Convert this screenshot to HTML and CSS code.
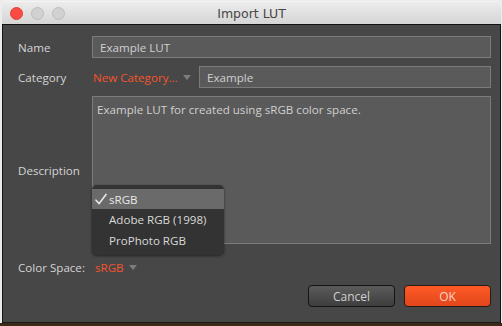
FILE: index.html
```html
<!DOCTYPE html>
<html>
<head>
<meta charset="utf-8">
<title>Import LUT</title>
<link rel="stylesheet" href="styles.css">
</head>
<body>
<div class="window">
  <div class="titlebar">
    <div class="lights">
      <span class="light red"></span>
      <span class="light"></span>
      <span class="light"></span>
    </div>
    <div class="title">Import LUT</div>
  </div>
  <div class="content">
    <div class="form">
      <div class="label">Name</div>
      <div class="field">Example LUT</div>

      <div class="label">Category</div>
      <div class="row">
        <div class="select cat">New Category...<span class="tri"></span></div>
        <div class="field grow">Example</div>
      </div>

      <div class="label">Description</div>
      <div class="field area">Example LUT for created using sRGB color space.</div>

      <div class="label cs">Color Space:</div>
      <div class="row cs">
        <div class="select space">sRGB<span class="tri"></span></div>
      </div>
    </div>
    <div class="buttons">
      <div class="btn cancel">Cancel</div>
      <div class="btn ok">OK</div>
    </div>
    <div class="menu">
      <div class="item sel">
        <svg class="check" width="12" height="12" viewBox="0 0 12 12"><path d="M1 7.2 L4.2 10.6 L11 1.4" fill="none" stroke="#e6e6e6" stroke-width="1.6" stroke-linecap="round" stroke-linejoin="round"/></svg>
        sRGB
      </div>
      <div class="item">Adobe RGB (1998)</div>
      <div class="item">ProPhoto RGB</div>
    </div>
  </div>
</div>
<div class="desk"></div>
</body>
</html>
```
FILE: styles.css
```css
html, body {
  margin: 0;
  padding: 0;
}
body {
  width: 502px;
  height: 326px;
  overflow: hidden;
  background: #ececec;
  font-family: "Open Sans", "DejaVu Sans", sans-serif;
  font-size: 11.6px;
}
.window {
  margin: 1px 1px 0 2px;
  width: 499px;
  height: 322px;
  display: flex;
  flex-direction: column;
  position: relative;
}
.titlebar {
  height: 22px;
  background: linear-gradient(#ececec, #d5d5d5);
  border-top: 1px solid #f4f4f4;
  border-radius: 5px 5px 0 0;
  border-bottom: 1px solid #111;
  position: relative;
  display: flex;
  align-items: center;
  justify-content: center;
}
.lights {
  position: absolute;
  left: 8px;
  top: 5px;
  display: flex;
  gap: 8px;
}
.light {
  width: 11px;
  height: 11px;
  border-radius: 50%;
  background: #d1d1d1;
  border: 0.5px solid #bdbdbd;
}
.light.red {
  background: #fc4b45;
  border-color: #e0413b;
}
.title {
  font-family: "DejaVu Sans", sans-serif;
  font-size: 12.5px;
  color: #464646;
  margin-top: 1px;
}
.content {
  flex: 1;
  background: #474747;
  border-left: 1px solid #151515;
  border-right: 1px solid #151515;
  border-bottom: 1px solid #1a1a1a;
  padding: 11px 9px 10px 15px;
  display: flex;
  flex-direction: column;
  position: relative;
}
.form {
  display: grid;
  grid-template-columns: 74px 1fr;
  grid-template-rows: 22px 22px 148px 22px;
  row-gap: 8px;
  align-items: center;
}
.label {
  color: #d4d4d4;
}
.label.cs, .row.cs {
  margin-top: 8px;
}
.row {
  display: flex;
  align-items: center;
  height: 22px;
}
.field {
  height: 22px;
  box-sizing: border-box;
  background: #5a5a5a;
  border: 1px solid #7b7b7b;
  color: #d0d0d0;
  padding: 0 7px;
  display: flex;
  align-items: center;
}
.field.grow {
  flex: 1;
}
.field.area {
  height: 148px;
  align-items: flex-start;
  padding: 5px 4px;
  line-height: 16px;
}
.select {
  color: #f5542c;
  display: flex;
  align-items: center;
}
.select.cat {
  width: 106px;
  padding-left: 1px;
}
.select.space {
  padding-left: 3px;
}
.tri {
  width: 0;
  height: 0;
  border-left: 4.5px solid transparent;
  border-right: 4.5px solid transparent;
  border-top: 5px solid #7d7d7d;
  margin-left: 5px;
  margin-top: 1px;
}
.buttons {
  margin-top: 11px;
  display: flex;
  justify-content: flex-end;
  gap: 9px;
}
.btn {
  width: 87px;
  height: 22px;
  box-sizing: border-box;
  border-radius: 4px;
  border: 1px solid #141414;
  display: flex;
  align-items: center;
  justify-content: center;
  font-size: 12px;
}
.cancel {
  background: linear-gradient(#5b5b5b, #3d3d3d);
  color: #cfcfcf;
}
.ok {
  background: linear-gradient(#ff5b26, #e1461b);
  color: #f6d6c8;
  border-color: #2a1a14;
}
.menu {
  position: absolute;
  left: 89px;
  top: 160px;
  width: 132px;
  box-sizing: border-box;
  padding: 4px 0;
  background: #333333;
  border-radius: 5px;
  box-shadow: 0 1px 3px rgba(0,0,0,0.5);
  color: #d8d8d8;
}
.item {
  height: 21px;
  padding-left: 17px;
  display: flex;
  align-items: center;
  position: relative;
}
.item.sel {
  height: 20px;
  background: #6a6a6a;
  color: #e8e8e8;
}
.check {
  position: absolute;
  left: 3px;
  top: 4px;
}
.desk {
  height: 3px;
  background: #3a2b18;
}
```
